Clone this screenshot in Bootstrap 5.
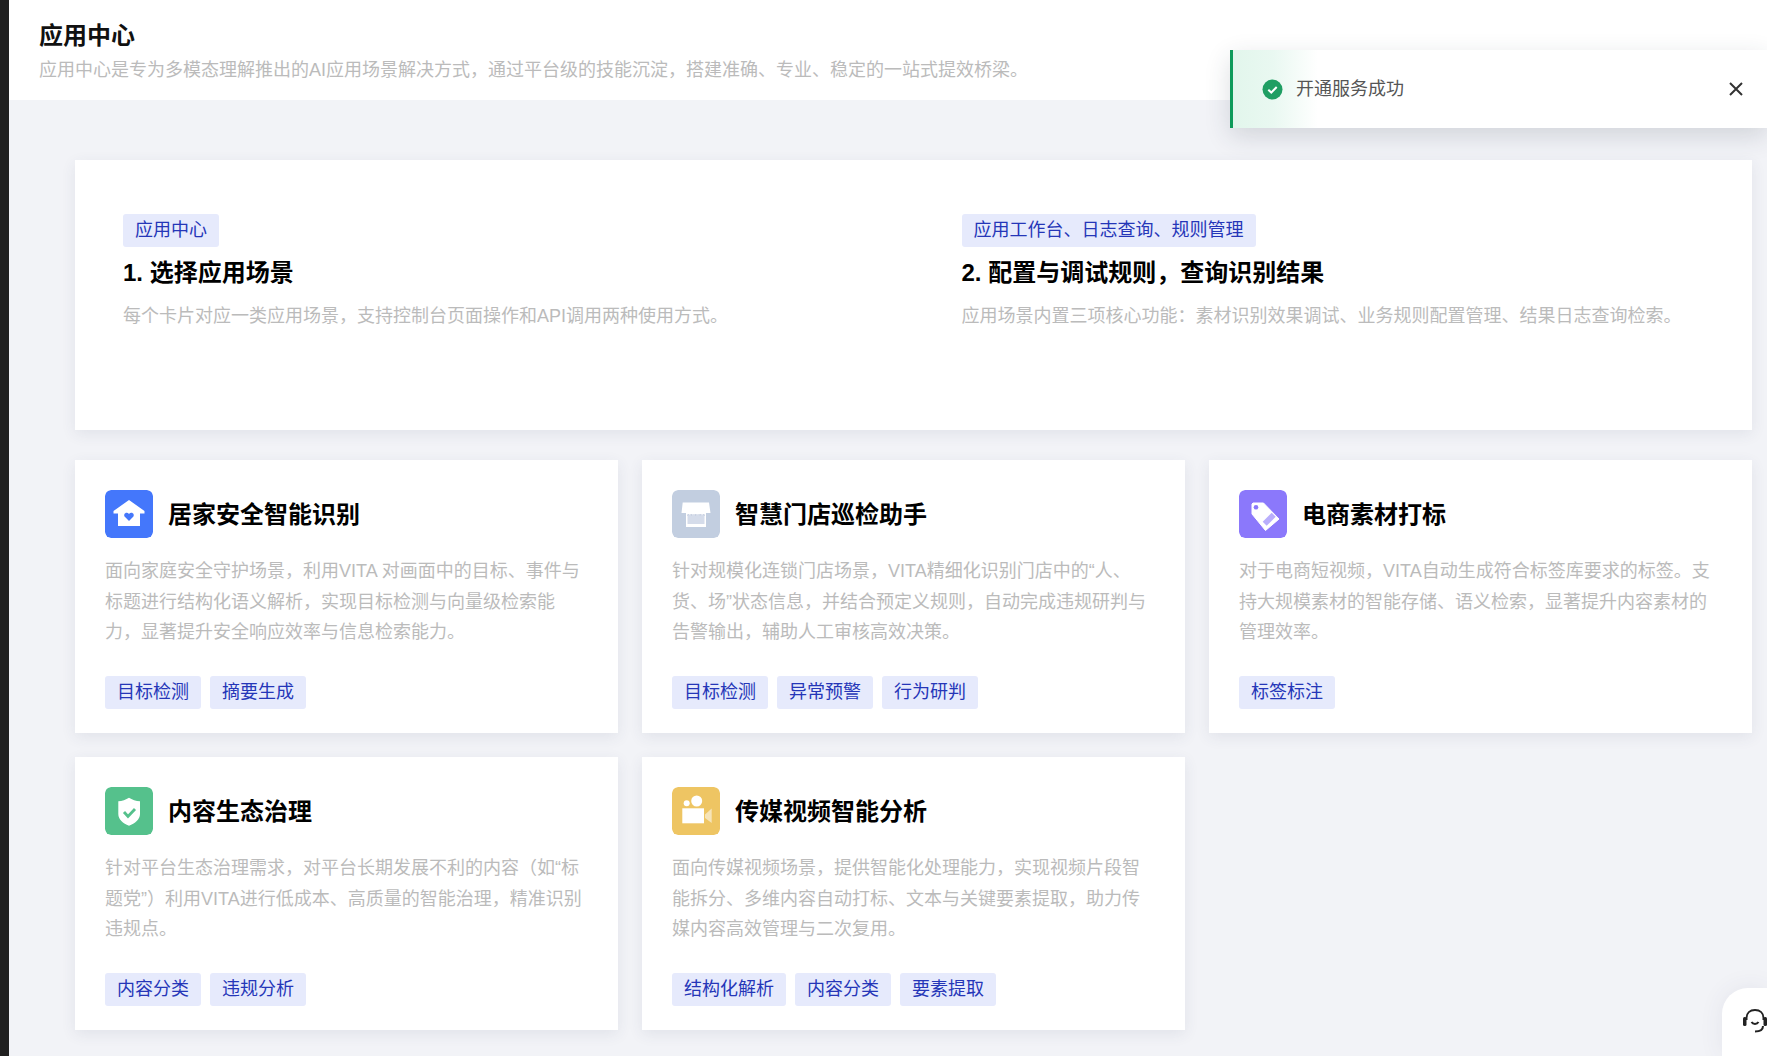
<!DOCTYPE html>
<html lang="zh-CN">
<head>
    <meta charset="UTF-8">
    <meta name="viewport" content="width=device-width, initial-scale=1.0">
    <title>应用中心</title>
    <link href="https://cdn.jsdelivr.net/npm/bootstrap@5.3.2/dist/css/bootstrap.min.css" rel="stylesheet">
    <style>
        body {
            font-family: "Liberation Sans", "Noto Sans CJK SC", sans-serif;
            background-color: #f2f3f7;
            height: 1056px;
            overflow: hidden;
        }
        .side-strip { width: 9px; background-color: #202020; flex: none; }
        .page-head { height: 100px; background-color: #fff; padding: 21px 30px 0; }
        .page-title { font-size: 24px; line-height: 30px; font-weight: 700; color: #111; margin: 0 0 4px; }
        .page-sub { font-size: 18px; line-height: 30px; color: #bbb; margin: 0; }
        .page-body { padding: 60px 15px 0 66px; }
        .intro-card {
            height: 270px;
            padding: 54px 48px 0;
            margin-bottom: 30px;
            border: 0;
            border-radius: 0;
            box-shadow: 0 4px 14px rgba(60, 70, 100, 0.09);
        }
        .intro-left { width: 838.5px; flex: none; }
        .tag-chip {
            display: inline-block;
            height: 33px;
            line-height: 33.5px;
            padding: 0 12px;
            font-size: 18px;
            color: #2536b8;
            background-color: #e6eafc;
            border-radius: 3px;
        }
        .tag-row { display: flex; gap: 9px; margin-top: auto; }
        .intro-title { font-size: 24px; line-height: 32px; font-weight: 700; color: #000; margin: 10px 0 12px; }
        .intro-desc { font-size: 18px; line-height: 30px; color: #bbb; margin: 0; }
        .scene-card {
            height: 273px;
            padding: 30px 30px 24px;
            border: 0;
            border-radius: 0;
            box-shadow: 0 4px 14px rgba(60, 70, 100, 0.09);
        }
        .scene-head { display: flex; align-items: center; gap: 15px; margin-bottom: 18px; }
        .scene-icon { width: 48px; height: 48px; border-radius: 6px; flex: none; display: block; }
        .scene-title { font-size: 24px; line-height: 46px; padding-top: 2px; font-weight: 700; color: #000; margin: 0; }
        .scene-desc { font-size: 18px; line-height: 30.6px; color: #bbb; margin: 0; height: 92px; }
        .toast-note {
            position: absolute;
            left: 1230px;
            right: 0;
            top: 50px;
            height: 78px;
            padding: 0 23px 0 29px;
            border-left: 3px solid #0e9b5a;
            background: linear-gradient(90deg, #e2f6ec 0, #e9f8f1 40px, #fff 85px);
            box-shadow: 0 8px 24px rgba(40, 50, 70, 0.16);
            font-size: 18px;
            color: #555;
        }
        .toast-text { margin-left: 13px; }
        .help-tab {
            position: absolute;
            left: 1722px;
            right: 0;
            top: 988px;
            bottom: 0;
            padding: 21px 0 0 21px;
            background-color: #fff;
            border-top-left-radius: 26px;
            box-shadow: 0 0 24px rgba(60, 70, 100, 0.08);
        }
    </style>
</head>
<body>
    <div class="d-flex">
        <div class="side-strip vh-100"></div>
        <div class="flex-grow-1">
            <div class="page-head">
                <h1 class="page-title">应用中心</h1>
                <p class="page-sub">应用中心是专为多模态理解推出的AI应用场景解决方式，通过平台级的技能沉淀，搭建准确、专业、稳定的一站式提效桥梁。</p>
            </div>
            <div class="page-body">
                <div class="card intro-card">
                    <div class="d-flex">
                        <div class="intro-left">
                            <span class="tag-chip">应用中心</span>
                            <h2 class="intro-title">1. 选择应用场景</h2>
                            <p class="intro-desc">每个卡片对应一类应用场景，支持控制台页面操作和API调用两种使用方式。</p>
                        </div>
                        <div class="flex-grow-1">
                            <span class="tag-chip">应用工作台、日志查询、规则管理</span>
                            <h2 class="intro-title">2. 配置与调试规则，查询识别结果</h2>
                            <p class="intro-desc">应用场景内置三项核心功能：素材识别效果调试、业务规则配置管理、结果日志查询检索。</p>
                        </div>
                    </div>
                </div>
                <div class="row g-4">
                    <div class="col-4">
                        <div class="card scene-card">
                            <div class="scene-head">
                                <svg class="scene-icon" viewBox="0 0 48 48">
                                    <rect width="48" height="48" rx="6" fill="#4477fb"/>
                                    <path d="M24 10 39.500 21V23.500H35V36H13V23.500H8.500V21Z" fill="#fff"/>
                                    <path d="M24 31 19.800 26.800C18.300 24.800 20 22.300 22 22.700 23 22.900 23.700 23.500 24 24.100 24.300 23.500 25 22.900 26 22.700 28 22.300 29.700 24.800 28.200 26.800Z" fill="#4477fb"/>
                                </svg>
                                <h3 class="scene-title">居家安全智能识别</h3>
                            </div>
                            <p class="scene-desc">面向家庭安全守护场景，利用VITA 对画面中的目标、事件与标题进行结构化语义解析，实现目标检测与向量级检索能力，显著提升安全响应效率与信息检索能力。</p>
                            <div class="tag-row">
                                <span class="tag-chip">目标检测</span><span class="tag-chip">摘要生成</span>
                            </div>
                        </div>
                    </div>
                    <div class="col-4">
                        <div class="card scene-card">
                            <div class="scene-head">
                                <svg class="scene-icon" viewBox="0 0 48 48">
                                    <rect width="48" height="48" rx="6" fill="#c2cee0"/>
                                    <path d="M10.700 12.500H37L38.500 23H34V37H14V23H9.500Z" fill="#fff"/>
                                    <rect x="15.500" y="24.500" width="17" height="9.500" fill="#d5dcea"/>
                                    <path d="M15.500 26C17 24 18.500 24 19.500 25.500 20.500 24 22 23.500 23.500 25.500 25 24 27 23.500 28 25.500 29.500 24 31 24 32.500 26V24.500H15.500Z" fill="#a9b7cf"/>
                                </svg>
                                <h3 class="scene-title">智慧门店巡检助手</h3>
                            </div>
                            <p class="scene-desc">针对规模化连锁门店场景，VITA精细化识别门店中的“人、货、场”状态信息，并结合预定义规则，自动完成违规研判与告警输出，辅助人工审核高效决策。</p>
                            <div class="tag-row">
                                <span class="tag-chip">目标检测</span><span class="tag-chip">异常预警</span><span class="tag-chip">行为研判</span>
                            </div>
                        </div>
                    </div>
                    <div class="col-4">
                        <div class="card scene-card">
                            <div class="scene-head">
                                <svg class="scene-icon" viewBox="0 0 48 48">
                                    <rect width="48" height="48" rx="6" fill="#8b78fb"/>
                                    <path d="M14 13H24.500L40 29 26.500 40.500 13 24V14Z" fill="#fff" stroke="#fff" stroke-linejoin="round"/>
                                    <circle cx="17" cy="17.300" r="2.300" fill="#8b78fb"/>
                                    <path d="M23.700 31.700 32.700 22.700 36.700 26.700 27.700 35.700Z" fill="#b9aefc"/>
                                </svg>
                                <h3 class="scene-title">电商素材打标</h3>
                            </div>
                            <p class="scene-desc">对于电商短视频，VITA自动生成符合标签库要求的标签。支持大规模素材的智能存储、语义检索，显著提升内容素材的管理效率。</p>
                            <div class="tag-row">
                                <span class="tag-chip">标签标注</span>
                            </div>
                        </div>
                    </div>
                    <div class="col-4">
                        <div class="card scene-card">
                            <div class="scene-head">
                                <svg class="scene-icon" viewBox="0 0 48 48">
                                    <rect width="48" height="48" rx="6" fill="#55c18c"/>
                                    <path d="M24 10.700C27 12.700 31 14 35 14.200V27C35 32.500 30 36.500 24 38.700 18 36.500 13.300 32.500 13.300 27V14.200C17 14 21 12.700 24 10.700Z" fill="#fff"/>
                                    <path d="M19 25 23 29.500 30 22" fill="none" stroke="#55c18c" stroke-width="2.800"/>
                                </svg>
                                <h3 class="scene-title">内容生态治理</h3>
                            </div>
                            <p class="scene-desc">针对平台生态治理需求，对平台长期发展不利的内容（如“标题党”）利用VITA进行低成本、高质量的智能治理，精准识别违规点。</p>
                            <div class="tag-row">
                                <span class="tag-chip">内容分类</span><span class="tag-chip">违规分析</span>
                            </div>
                        </div>
                    </div>
                    <div class="col-4">
                        <div class="card scene-card">
                            <div class="scene-head">
                                <svg class="scene-icon" viewBox="0 0 48 48">
                                    <rect width="48" height="48" rx="6" fill="#eec563"/>
                                    <circle cx="14.700" cy="16.300" r="3" fill="#fff"/>
                                    <circle cx="24.700" cy="14" r="5.500" fill="#fff"/>
                                    <rect x="10.300" y="21.300" width="21.700" height="15" fill="#fff"/>
                                    <path d="M33 27.500 39.700 21.500V36L33 31Z" fill="#f6e4b8"/>
                                </svg>
                                <h3 class="scene-title">传媒视频智能分析</h3>
                            </div>
                            <p class="scene-desc">面向传媒视频场景，提供智能化处理能力，实现视频片段智能拆分、多维内容自动打标、文本与关键要素提取，助力传媒内容高效管理与二次复用。</p>
                            <div class="tag-row">
                                <span class="tag-chip">结构化解析</span><span class="tag-chip">内容分类</span><span class="tag-chip">要素提取</span>
                            </div>
                        </div>
                    </div>
                </div>
            </div>
        </div>
    </div>

    <div class="toast-note d-flex align-items-center">
        <svg width="21" height="21" viewBox="0 0 21 21">
            <circle cx="10.500" cy="10.500" r="10" fill="#1f9e63"/>
            <path d="M6.300 10.700 9.300 13.500 14.700 8" fill="none" stroke="#fff" stroke-width="2"/>
        </svg>
        <span class="toast-text">开通服务成功</span>
        <svg width="16" height="16" viewBox="0 0 16 16" class="ms-auto">
            <path d="M2 2 14 14M14 2 2 14" stroke="#333" stroke-width="2"/>
        </svg>
    </div>

    <div class="help-tab">
        <svg width="24" height="24" viewBox="0 0 24 24" class="d-block">
            <path d="M3.500 11V9C3.500 4 7 1 12 1S20.500 4 20.500 9V11" fill="none" stroke="#222" stroke-width="2"/>
            <rect x="0" y="8" width="3.500" height="9" rx="1.500" fill="#222"/>
            <rect x="20.500" y="8" width="3.500" height="9" rx="1.500" fill="#222"/>
            <path d="M8.500 13C10 15.500 14 15.500 15.500 13" fill="none" stroke="#222" stroke-width="2"/>
            <path d="M20 17C20 21 17 22.500 12 22.500" fill="none" stroke="#222" stroke-width="2"/>
        </svg>
    </div>

    <script src="https://cdn.jsdelivr.net/npm/bootstrap@5.3.2/dist/js/bootstrap.bundle.min.js"></script>
</body>
</html>
